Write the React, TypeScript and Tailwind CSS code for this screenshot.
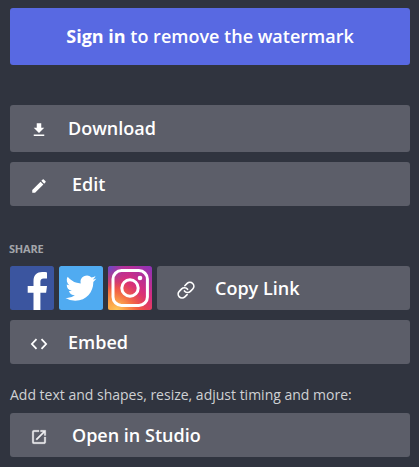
import React from 'react';

interface ActionButtonProps {
    icon: React.ReactNode;
    label: string;
    className?: string;
    labelClass?: string;
}

const ActionButton: React.FC<ActionButtonProps> = ({ icon, label, className = 'h-11 w-full', labelClass = 'ml-5' }) => {
    return (
        <button className={`flex items-center rounded-[3px] bg-[#5c5e69] pl-5 text-lg font-semibold text-white ${className}`}>
            {icon}
            <span className={`leading-6 ${labelClass}`}>{label}</span>
        </button>
    );
};

const DownloadIcon = () => (
    <svg className="relative top-0.5 h-[18px] w-[18px]" viewBox="0 0 24 24" fill="currentColor">
        <path d="M19 9h-4V3H9v6H5l7 7 7-7zM5 18v2h14v-2H5z" />
    </svg>
);

const EditIcon = () => (
    <svg className="relative top-0.5 h-[18px] w-[18px]" viewBox="0 0 24 24" fill="currentColor">
        <path d="M3 17.25V21h3.75L17.81 9.94l-3.75-3.75L3 17.25zM20.71 7.04a1 1 0 0 0 0-1.41l-2.34-2.34a1 1 0 0 0-1.41 0l-1.83 1.83 3.75 3.75 1.83-1.83z" />
    </svg>
);

const LinkIcon = () => (
    <svg className="relative top-0.5 h-[18px] w-[18px] overflow-visible" viewBox="0 0 24 24" fill="none" stroke="currentColor" strokeWidth="2.1" strokeLinecap="round" strokeLinejoin="round">
        <g transform="translate(-0.6 -0.4) scale(1.05)">
            <path d="M10 13a5 5 0 0 0 7.54.54l3-3a5 5 0 0 0-7.07-7.07l-2.9 2.9" />
            <path d="M14 11a5 5 0 0 0-7.54-.54l-3 3a5 5 0 0 0 7.07 7.07l2.9-2.9" />
        </g>
    </svg>
);

const CodeIcon = () => (
    <svg className="relative top-0.5 h-[18px] w-[18px]" viewBox="0 0 18 18" fill="none" stroke="currentColor" strokeWidth="1.8">
        <path d="M6.5 4.1 1.9 9l4.6 4.9M11.5 4.1 16.1 9l-4.6 4.9" />
    </svg>
);

const OpenIcon = () => (
    <svg className="relative top-0.5 h-[18px] w-[18px] text-[#efeff1]" viewBox="0 0 24 24" fill="currentColor" stroke="currentColor" strokeWidth="0.4">
        <path d="M19 19H5V5h7V3H5a2 2 0 0 0-2 2v14a2 2 0 0 0 2 2h14c1.1 0 2-.9 2-2v-7h-2v7zM14 3v2h3.59l-9.83 9.83 1.41 1.41L19 6.41V10h2V3h-7z" />
    </svg>
);

const FacebookLogo = () => (
    <svg className="h-11 w-11" viewBox="0 0 44 44">
        <rect width="44" height="44" rx="2.5" fill="#3b559f" />
        <path fill="#fff" d="M23.5 44V26.7h-5.8V20h5.8v-5c0-5.7 3.5-8.9 8.7-8.9 2.5 0 4.2.2 4.8.3v6h-3.2c-2.8 0-3.4 1.4-3.4 3.3V20h6.6l-.9 6.7h-5.7V44z" />
    </svg>
);

const TwitterLogo = () => (
    <svg className="h-11 w-11" viewBox="0 0 44 44">
        <rect width="44" height="44" rx="2.5" fill="#50abf1" />
        <path
            fill="#fff"
            transform="translate(6.5 6.7) scale(1.29)"
            d="M23.95 4.57a10 10 0 0 1-2.82.77 4.96 4.96 0 0 0 2.16-2.72c-.95.55-2 .95-3.13 1.18a4.92 4.92 0 0 0-8.38 4.48A13.93 13.93 0 0 1 1.64 3.16a4.92 4.92 0 0 0 1.52 6.57 4.9 4.9 0 0 1-2.23-.61v.06a4.92 4.92 0 0 0 3.95 4.83 4.99 4.99 0 0 1-2.21.08 4.94 4.94 0 0 0 4.6 3.42A9.87 9.87 0 0 1 0 19.54a13.99 13.99 0 0 0 7.55 2.21c9.05 0 14-7.5 14-13.98 0-.21 0-.42-.02-.63a9.94 9.94 0 0 0 2.42-2.57z"
        />
    </svg>
);

const InstagramLogo = () => (
    <svg className="h-11 w-11" viewBox="0 0 44 44">
        <defs>
            <linearGradient id="ig-base" x1="0.1" y1="1" x2="0.9" y2="0">
                <stop offset="0" stopColor="#f9a13b" />
                <stop offset="0.3" stopColor="#ee4c43" />
                <stop offset="0.6" stopColor="#d62d7e" />
                <stop offset="1" stopColor="#9232b4" />
            </linearGradient>
            <radialGradient id="ig-yellow" cx="0.2" cy="1" r="0.65">
                <stop offset="0" stopColor="#ffc857" />
                <stop offset="1" stopColor="#f9773b" stopOpacity="0" />
            </radialGradient>
            <radialGradient id="ig-violet" cx="0" cy="0" r="0.55">
                <stop offset="0" stopColor="#5b4fd0" />
                <stop offset="1" stopColor="#b02fa4" stopOpacity="0" />
            </radialGradient>
        </defs>
        <rect width="44" height="44" rx="2.5" fill="url(#ig-base)" />
        <rect width="44" height="44" rx="2.5" fill="url(#ig-yellow)" />
        <rect width="44" height="44" rx="2.5" fill="url(#ig-violet)" />
        <g fill="none" stroke="#fff" strokeWidth="3">
            <rect x="5" y="4.6" width="34.4" height="34.8" rx="8.5" />
            <circle cx="22" cy="22" r="8.2" />
        </g>
        <circle cx="32" cy="12" r="2.3" fill="#fff" />
    </svg>
);

const App: React.FC = () => {
    return (
        <div className="flex h-[467px] w-[419px] flex-col bg-[#30343f] pt-2 pr-[9px] pl-2.5 font-['Open_Sans',sans-serif]">
            <button className="h-[57px] w-full shrink-0 rounded-[3px] bg-[#5869e2] pb-0.5 text-lg font-semibold text-white">
                <span className="font-bold">Sign in</span> to remove the watermark
            </button>

            <div className="mt-10 flex flex-col gap-2.5">
                <ActionButton icon={<DownloadIcon />} label="Download" className="h-[47px] w-full pb-0.5" />
                <ActionButton icon={<EditIcon />} label="Edit" labelClass="ml-6" />
            </div>

            <div className="-ml-px mt-[35px] h-[25px] text-[11px] leading-4 font-bold tracking-[-0.2px] text-[#a3a5aa]">SHARE</div>
            <div className="flex gap-[5px]">
                <FacebookLogo />
                <TwitterLogo />
                <InstagramLogo />
                <ActionButton icon={<LinkIcon />} label="Copy Link" className="h-11 flex-1" />
            </div>
            <ActionButton icon={<CodeIcon />} label="Embed" className="mt-2.5 h-11 w-full" />

            <p className="mt-[21px] mb-2 text-sm leading-5 whitespace-nowrap text-[#cfd1d4]">
                Add text and shapes, resize, adjust timing and more:
            </p>
            <ActionButton icon={<OpenIcon />} label="Open in Studio" labelClass="ml-6" />
        </div>
    );
};

export default App;
